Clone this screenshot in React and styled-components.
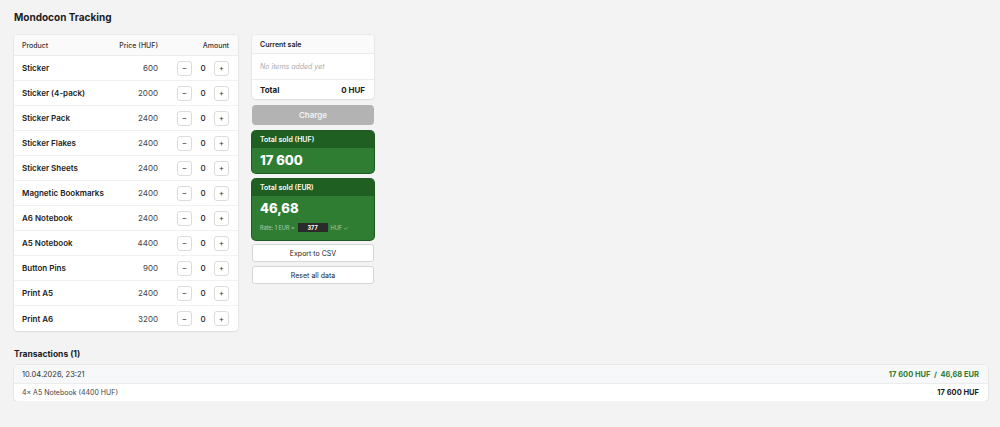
import React from 'react'
import styled, { createGlobalStyle } from 'styled-components'

const products = [
  ['Sticker', 600],
  ['Sticker (4-pack)', 2000],
  ['Sticker Pack', 2400],
  ['Sticker Flakes', 2400],
  ['Sticker Sheets', 2400],
  ['Magnetic Bookmarks', 2400],
  ['A6 Notebook', 2400],
  ['A5 Notebook', 4400],
  ['Button Pins', 900],
  ['Print A5', 2400],
  ['Print A6', 3200],
]

const GlobalStyle = createGlobalStyle`
  html, body {
    margin: 0;
    background: #f3f3f3;
    font-family: Inter, "Noto Sans", "Liberation Sans", sans-serif;
    color: #1d1d1f;
  }
`

const App = () => {
  return (
    <React.Fragment>
      <GlobalStyle />
      <Page>
        <Title>Mondocon Tracking</Title>
        <Top>
          <Card width="224px">
            <HeadRow>
              <Cell>Product</Cell>
              <Cell align="right">Price (HUF)</Cell>
              <Cell align="right">Amount</Cell>
            </HeadRow>
            {products.map(([name, price]) => (
              <Row key={name}>
                <Name>{name}</Name>
                <Price>{price}</Price>
                <Counter>
                  <StepBtn>−</StepBtn>
                  <Count>0</Count>
                  <StepBtn>+</StepBtn>
                </Counter>
              </Row>
            ))}
          </Card>
          <Side>
            <Card>
              <SaleHead>Current sale</SaleHead>
              <Empty>No items added yet</Empty>
              <TotalRow>
                <span>Total</span>
                <span>0 HUF</span>
              </TotalRow>
            </Card>
            <ChargeBtn>Charge</ChargeBtn>
            <StatCard>
              <StatHead>Total sold (HUF)</StatHead>
              <StatBody>
                <StatValue>17 600</StatValue>
              </StatBody>
            </StatCard>
            <StatCard>
              <StatHead>Total sold (EUR)</StatHead>
              <StatBody>
                <StatValue>46,68</StatValue>
                <Rate>
                  Rate: 1 EUR = <RateInput>377</RateInput> HUF ✓
                </Rate>
              </StatBody>
            </StatCard>
            <Buttons>
              <PlainBtn>Export to CSV</PlainBtn>
              <PlainBtn>Reset all data</PlainBtn>
            </Buttons>
          </Side>
        </Top>
        <SubTitle>Transactions (1)</SubTitle>
        <Card>
          <TxHead>
            <span>10.04.2026, 23:21</span>
            <TxSum>17 600 HUF &nbsp;/&nbsp; 46,68 EUR</TxSum>
          </TxHead>
          <TxLine>
            <span>4× A5 Notebook (4400 HUF)</span>
            <strong>17 600 HUF</strong>
          </TxLine>
        </Card>
      </Page>
    </React.Fragment>
  )
}

const Page = styled.div`
  padding: 10px 12px 0 14px;
`

const Title = styled.h1`
  margin: 0 0 10px 0;
  font-size: 10px;
  font-weight: 700;
  line-height: 15px;
`

const Top = styled.div`
  display: flex;
  align-items: flex-start;
  gap: 14px;
`

const Card = styled.div`
  width: ${(p) => p.width || 'auto'};
  background: #fff;
  border-radius: 4px;
  box-shadow: 0 0 0 1px rgba(0, 0, 0, 0.04), 0 1px 2px rgba(0, 0, 0, 0.06);
  overflow: hidden;
`

const HeadRow = styled.div`
  display: grid;
  grid-template-columns: 1fr 50px 71px;
  align-items: center;
  height: 20px;
  padding: 0 9px 0 8px;
  background: #fafafa;
  border-bottom: 1px solid #ececec;
  font-size: 7px;
  font-weight: 500;
  color: #333;
`

const Cell = styled.span`
  text-align: ${(p) => p.align || 'left'};
  white-space: nowrap;
`

const Row = styled.div`
  display: grid;
  grid-template-columns: 1fr 50px 71px;
  align-items: center;
  height: 25px;
  padding: 0 9px 0 8px;
  border-bottom: 1px solid #f1f1f1;
  box-sizing: border-box;
  &:last-child {
    border-bottom: none;
  }
`

const Name = styled.span`
  font-size: 8px;
  font-weight: 600;
  color: #222;
  white-space: nowrap;
`

const Price = styled.span`
  font-size: 8px;
  color: #444;
  text-align: right;
`

const Counter = styled.div`
  display: flex;
  align-items: center;
  justify-content: flex-end;
`

const StepBtn = styled.div`
  width: 15px;
  height: 15px;
  box-sizing: border-box;
  border: 1px solid #dcdcdc;
  border-radius: 3px;
  background: #fff;
  display: flex;
  align-items: center;
  justify-content: center;
  font-size: 8px;
  color: #333;
`

const Count = styled.span`
  width: 22px;
  text-align: center;
  font-size: 8px;
  font-weight: 500;
`

const Side = styled.div`
  width: 122px;
  display: flex;
  flex-direction: column;
  gap: 6px;
`

const SaleHead = styled.div`
  height: 18px;
  display: flex;
  align-items: center;
  padding: 0 8px;
  font-size: 7px;
  font-weight: 600;
  background: #fafafa;
  border-bottom: 1px solid #ececec;
`

const Empty = styled.div`
  height: 25px;
  display: flex;
  align-items: center;
  padding: 0 8px;
  font-size: 7px;
  font-style: italic;
  color: #aaa;
  border-bottom: 1px solid #ececec;
`

const TotalRow = styled.div`
  height: 19px;
  display: flex;
  align-items: center;
  justify-content: space-between;
  padding: 0 9px 0 8px;
  font-size: 8px;
  font-weight: 700;
`

const ChargeBtn = styled.div`
  height: 20px;
  border-radius: 4px;
  background: #b3b3b3;
  color: #f3f3f3;
  display: flex;
  align-items: center;
  justify-content: center;
  font-size: 8px;
  font-weight: 600;
`

const StatCard = styled.div`
  border-radius: 4px;
  overflow: hidden;
  background: #2f7d33;
  color: #fff;
  box-shadow: 0 0 0 1px #1f5a22;
`

const StatHead = styled.div`
  height: 17px;
  display: flex;
  align-items: center;
  padding: 0 8px;
  background: #1f5f22;
  font-size: 7px;
  font-weight: 600;
`

const StatBody = styled.div`
  padding: 4px 8px 5px 8px;
`

const StatValue = styled.div`
  font-size: 13px;
  font-weight: 800;
  line-height: 16px;
`

const Rate = styled.div`
  margin: 7px 0 3px 0;
  display: flex;
  align-items: center;
  gap: 3px;
  font-size: 5.5px;
  color: rgba(255, 255, 255, 0.6);
`

const RateInput = styled.span`
  width: 30px;
  height: 9px;
  background: #2a2a2a;
  color: #fff;
  font-weight: 700;
  display: inline-flex;
  align-items: center;
  justify-content: center;
`

const Buttons = styled.div`
  display: flex;
  flex-direction: column;
  gap: 4px;
  margin-top: -2px;
`

const PlainBtn = styled.div`
  height: 18px;
  box-sizing: border-box;
  border: 1px solid #d6d6d6;
  border-radius: 3px;
  background: #fff;
  display: flex;
  align-items: center;
  justify-content: center;
  font-size: 7px;
  color: #222;
`

const SubTitle = styled.h2`
  margin: 18px 0 6px 0;
  font-size: 8.5px;
  font-weight: 700;
`

const TxHead = styled.div`
  height: 18px;
  display: flex;
  align-items: center;
  justify-content: space-between;
  padding: 0 9px 0 8px;
  background: #f7f8f9;
  border-bottom: 1px solid #ececec;
  font-size: 7.5px;
  color: #333;
`

const TxSum = styled.span`
  color: #2e7d32;
  font-weight: 700;
`

const TxLine = styled.div`
  height: 17px;
  display: flex;
  align-items: center;
  justify-content: space-between;
  padding: 0 9px 0 8px;
  font-size: 7px;
  color: #444;
  strong {
    color: #222;
    font-size: 7.5px;
  }
`

export default App
